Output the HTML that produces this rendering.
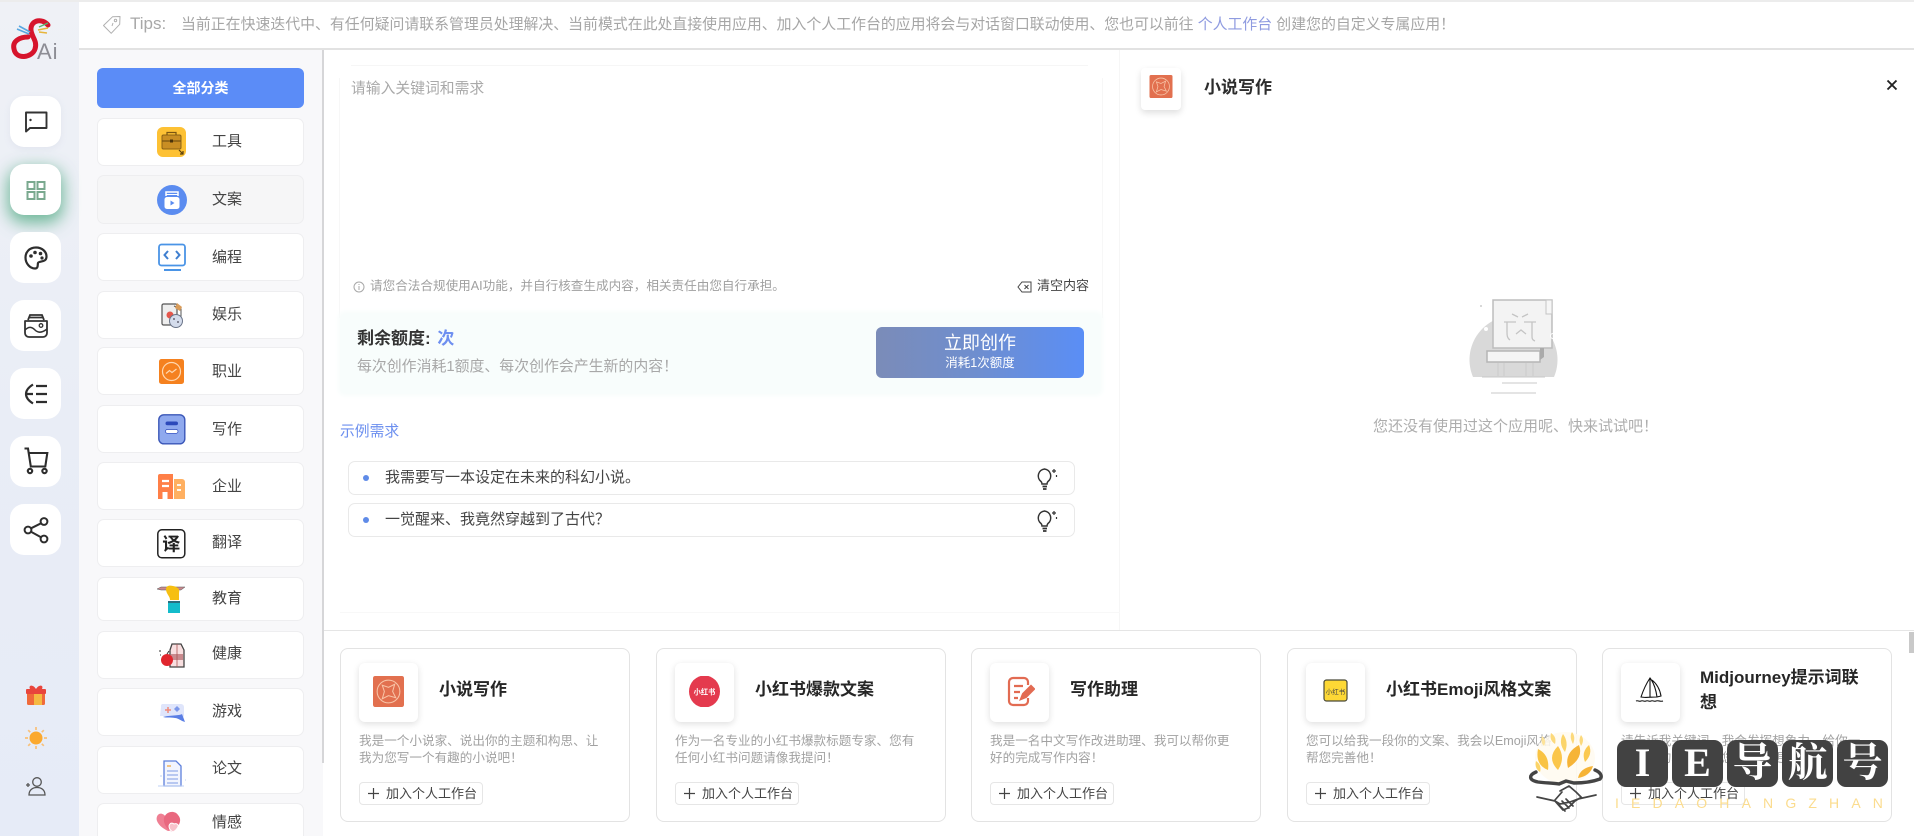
<!DOCTYPE html>
<html lang="zh-CN"><head><meta charset="utf-8"><title>小说写作</title>
<style>
*{box-sizing:border-box}
html,body{margin:0;padding:0;width:1914px;height:836px;overflow:hidden;background:#fff}
body{position:relative;font-family:"Liberation Sans","Noto Sans CJK SC",sans-serif;color:#333}
.a{position:absolute}
.t{position:absolute;white-space:nowrap}
.r{position:absolute;left:10px;width:51px;height:51px;background:#fff;border-radius:14px}
.r svg{position:absolute;left:0;top:0}
.c{position:absolute;left:97px;width:207px;background:#fff;border:1px solid #eeeef0;border-radius:7px}
.ct{position:absolute;left:212px;font-size:15px;line-height:20px;color:#444;white-space:nowrap}
.ci{position:absolute;left:155px}
.card{position:absolute;top:648px;width:290px;height:174px;border:1px solid #e3e3e3;border-radius:8px;background:#fff}
.ib{position:absolute;left:18px;top:14px;width:59px;height:59px;background:#fff;border-radius:6px;box-shadow:0 2px 7px rgba(0,0,0,.13)}
.ib svg{position:absolute;left:14px;top:13px}
.ti{position:absolute;left:98px;top:29px;font-size:17px;line-height:24px;font-weight:700;color:#262626;white-space:nowrap}
.de{position:absolute;left:18px;top:84px;width:250px;font-size:12.6px;line-height:17px;color:#a2a2a2}
.bt{position:absolute;left:18px;top:133px;width:124px;height:23px;border:1px solid #e6e6e6;border-radius:4px;font-size:13px;line-height:21px;color:#444;padding-left:26px;white-space:nowrap}
.bt svg{position:absolute;left:8px;top:5px}
.ex{position:absolute;left:348px;width:727px;height:34px;border:1px solid #e9e9e9;border-radius:7px;background:#fff}
.ex i{position:absolute;left:14px;top:13px;width:6px;height:6px;border-radius:50%;background:#5f8be8}
.ex span{position:absolute;left:36px;top:6px;font-size:15px;line-height:20px;color:#444;white-space:nowrap}
.ex svg{position:absolute;left:686px;top:5px}
.seal{position:absolute;top:740px;width:51px;height:47px;background:#424242;border-radius:9px;color:#fff;font-family:"Liberation Serif","Noto Serif CJK SC",serif;font-size:40px;line-height:46px;text-align:center;font-weight:700}
</style></head><body>

<!-- rail -->
<div class="a" style="left:0;top:0;width:79px;height:836px;background:linear-gradient(180deg,#eff1f6 0%,#e9edf6 50%,#e6ebf7 100%)"></div>
<div class="a" style="left:79px;top:50px;width:244px;height:786px;background:#f8f8fa"></div>
<div class="a" style="left:322px;top:50px;width:2px;height:713px;background:#d6d6d8"></div>
<div class="a" style="left:0;top:0;width:1914px;height:2px;background:#ececec"></div>
<div class="a" style="left:79px;top:2px;width:1835px;height:47px;background:#fff"></div>
<div class="a" style="left:79px;top:48px;width:1835px;height:2px;background:#e2e2e2"></div>

<!-- logo -->
<svg class="a" style="left:8px;top:16px" width="56" height="48" viewBox="0 0 56 48">
<path d="M40 9C34 2 24 4 23 12C22 20 30 24 27 33C24 42 8 44 6 33C4 25 12 21 20 21" fill="none" stroke="#d6142c" stroke-width="5" stroke-linecap="round"/>
<path d="M9 13l12 5M11 10l11 6" stroke="#58a7e0" stroke-width="1.6"/><path d="M30 14l10-2M31 16l8 1" stroke="#e7b53c" stroke-width="1.6"/><path d="M31 11l9-4" stroke="#57b56d" stroke-width="1.4"/>
</svg>
<div class="t" style="left:37px;top:40px;font-size:22px;line-height:24px;color:#8d8d95;font-weight:400;letter-spacing:1px">Ai</div>

<div class="r" style="top:96px;box-shadow:0 2px 6px rgba(190,198,220,.25)"><svg width="51" height="51" viewBox="0 0 51 51"><path d="M16 16.500h20.500v15.500H20l-4 3.500z" fill="none" stroke="#333" stroke-width="1.900" stroke-linejoin="round"/><circle cx="20.500" cy="24" r="1.200" fill="#333"/></svg></div>
<div class="r" style="top:164px;box-shadow:0 6px 16px 2px rgba(80,170,130,.8)"><svg width="51" height="51" viewBox="0 0 51 51" fill="none" stroke="#7aa98f" stroke-width="2"><rect x="17.500" y="18" width="7" height="7"/><rect x="27.500" y="18" width="7" height="7"/><rect x="17.500" y="28" width="7" height="7"/><rect x="27.500" y="28" width="7" height="7"/></svg></div>
<div class="r" style="top:232px"><svg width="51" height="51" viewBox="0 0 51 51"><path d="M26 15.500C19 15.500 15.500 20.500 15.500 25.500C15.500 31.500 20 36.500 25 36.500C28.500 36.500 27.500 32.500 28 31C29 28.500 36.500 31 36.500 24.500C36.500 19.500 32 15.500 26 15.500Z" fill="none" stroke="#2d2d2d" stroke-width="2.200"/><circle cx="21" cy="24" r="1.800" fill="#2d2d2d"/><circle cx="25" cy="20.500" r="1.800" fill="#2d2d2d"/><circle cx="30.500" cy="21.500" r="1.800" fill="#2d2d2d"/><circle cx="32" cy="26" r="1.600" fill="#2d2d2d"/></svg></div>
<div class="r" style="top:300px"><svg width="51" height="51" viewBox="0 0 51 51" fill="none" stroke="#333" stroke-width="1.800"><path d="M15 21h22v12a4 4 0 0 1-4 4H19a4 4 0 0 1-4-4z" stroke-linejoin="round"/><path d="M18 20l2-5h12l2 5M19 17.500h14"/><path d="M15 30c4-4 7-3 10 0s7 3 12-1" stroke-width="1.500"/><circle cx="31" cy="25.500" r="1.800" stroke-width="1.300"/></svg></div>
<div class="r" style="top:368px"><svg width="51" height="51" viewBox="0 0 51 51" fill="none" stroke="#2d2d2d" stroke-width="2.200"><path d="M23 16.500c-4 2.500-7 5.500-7 9.500 0 4 3 7 7 9.500M16 26h7"/><path d="M26 18h11M26 26h11M26 34h11"/></svg></div>
<div class="r" style="top:436px"><svg width="51" height="51" viewBox="0 0 51 51" fill="none" stroke="#2d2d2d" stroke-width="2.100"><path d="M14.500 12.500h3.500l2.800 18h14.500l2-13.500H18.500"/><circle cx="20" cy="35" r="2.200"/><circle cx="34.500" cy="35" r="2.200"/></svg></div>
<div class="r" style="top:504px"><svg width="51" height="51" viewBox="0 0 51 51" fill="none" stroke="#2d2d2d" stroke-width="2"><circle cx="34" cy="17.500" r="3.400"/><circle cx="18" cy="26" r="3.400"/><circle cx="34" cy="35" r="3.400"/><path d="M21 24.300l10-5M21 27.700l10 5.500"/></svg></div>

<!-- gift / sun / user -->
<svg class="a" style="left:25px;top:684px" width="22" height="22" viewBox="0 0 22 22"><rect x="2" y="6" width="18" height="15" rx="1.500" fill="#f06a3a"/><rect x="9" y="6" width="8" height="15" fill="#f5b942"/><rect x="1" y="5" width="20" height="5" rx="1" fill="#e8453c"/><path d="M11 5C8 0 3 1 5 5zM11 5c3-5 8-4 6 0z" fill="#e8453c"/></svg>
<svg class="a" style="left:25px;top:727px" width="22" height="22" viewBox="0 0 22 22"><circle cx="11" cy="11" r="6.500" fill="#fba92f"/><path d="M11 0v3M11 19v3M0 11h3M19 11h3M3.200 3.200l2 2M16.800 16.800l2 2M18.800 3.200l-2 2M5.200 16.800l-2 2" stroke="#f9c077" stroke-width="1.700"/></svg>
<svg class="a" style="left:25px;top:776px" width="22" height="20" viewBox="0 0 22 20" fill="none" stroke="#555" stroke-width="1.300"><circle cx="12" cy="6" r="4.300"/><path d="M4 19c0-5 3.500-7.500 8-7.500s8 2.500 8 7.500z"/><path d="M1 9h4M3 7v4"/></svg>

<!-- categories -->
<div class="a" style="left:97px;top:68px;width:207px;height:40px;background:#5b8cf7;border-radius:6px;color:#fff;font-size:14px;font-weight:700;line-height:40px;text-align:center">全部分类</div>

<div class="c" style="top:118px;height:48px"></div>
<div class="c" style="top:175px;height:49px;background:#f6f6f7"></div>
<div class="c" style="top:233px;height:48px"></div>
<div class="c" style="top:291px;height:48px"></div>
<div class="c" style="top:347px;height:48px"></div>
<div class="c" style="top:405px;height:48px"></div>
<div class="c" style="top:462px;height:48px"></div>
<div class="c" style="top:519px;height:48px"></div>
<div class="c" style="top:577px;height:44px"></div>
<div class="c" style="top:631px;height:48px"></div>
<div class="c" style="top:688px;height:48px"></div>
<div class="c" style="top:746px;height:48px"></div>
<div class="c" style="top:803px;height:48px"></div>

<div class="ct" style="top:132px">工具</div>
<div class="ct" style="top:190px">文案</div>
<div class="ct" style="top:248px">编程</div>
<div class="ct" style="top:305px">娱乐</div>
<div class="ct" style="top:362px">职业</div>
<div class="ct" style="top:420px">写作</div>
<div class="ct" style="top:477px">企业</div>
<div class="ct" style="top:533px">翻译</div>
<div class="ct" style="top:589px">教育</div>
<div class="ct" style="top:644px">健康</div>
<div class="ct" style="top:702px">游戏</div>
<div class="ct" style="top:759px">论文</div>
<div class="ct" style="top:813px">情感</div>

<svg class="ci" style="top:125px" width="32" height="34" viewBox="0 0 32 34"><rect x="2" y="2" width="29" height="30" rx="6" fill="#fdc134"/><rect x="7" y="10" width="19" height="14" rx="1.500" fill="#c98e23" stroke="#8a6216"/><path d="M12 10V7.500h9V10M7 16h19" fill="none" stroke="#7a5512" stroke-width="1.200"/><rect x="15" y="14.500" width="3" height="3" fill="#4a330a"/><path d="M24 25l4 4M28 26v3h-3" fill="none" stroke="#5a400c" stroke-width="1.200"/></svg>
<svg class="ci" style="top:183px" width="32" height="34" viewBox="0 0 32 34"><circle cx="17" cy="17" r="15" fill="#5b8cf0"/><path d="M11 13V9h12v4" fill="none" stroke="#fff" stroke-width="1.500"/><path d="M11 11.500h12" stroke="#fff"/><rect x="9.500" y="14" width="15" height="12" rx="2.500" fill="#fff"/><path d="M15.500 17.500l4 2.500-4 2.500z" fill="#5b8cf0"/></svg>
<svg class="ci" style="top:241px" width="32" height="34" viewBox="0 0 32 34" fill="none" stroke="#4a94e6" stroke-width="1.800"><rect x="4" y="3.500" width="26" height="21" rx="2.500"/><path d="M13 10l-3.500 4 3.500 4M21 10l3.500 4-3.500 4" stroke-width="2" stroke="#3f7fd0"/><path d="M9 29h17" stroke-width="2"/></svg>
<svg class="ci" style="top:300px" width="32" height="30" viewBox="0 0 32 30"><rect x="7" y="4" width="15" height="21" rx="1.500" fill="#eee" stroke="#555" stroke-width="1.200"/><path d="M19 6l7 3v8" fill="none" stroke="#555"/><path d="M22 3l5 4-2 4-5-3z" fill="#d99c5a"/><circle cx="15" cy="15" r="3.500" fill="#e5574c"/><circle cx="21" cy="21" r="6.500" fill="#d4dcec" stroke="#6a7488"/><circle cx="19" cy="19" r="1" fill="#667"/><circle cx="23" cy="22" r="1" fill="#667"/></svg>
<svg class="ci" style="top:356px" width="32" height="31" viewBox="0 0 32 31"><rect x="4" y="3" width="25" height="25" rx="2.500" fill="#f5811f"/><circle cx="16.500" cy="15.500" r="9" fill="none" stroke="#ffd8b0" stroke-width="1.200"/><path d="M11 17.500l3.500-3 2.500 2 4.500-3.500" fill="none" stroke="#ffd8b0" stroke-width="1.200"/></svg>
<svg class="ci" style="top:412px" width="32" height="34" viewBox="0 0 32 34"><rect x="3.800" y="2.800" width="26" height="29" rx="5" fill="#8fa9ee" stroke="#3b57b8" stroke-width="1.400"/><rect x="10.500" y="9.500" width="12.500" height="3.800" rx="1.900" fill="#2c49ba"/><rect x="10.500" y="17.500" width="12.500" height="3.800" rx="1.900" fill="#fff" stroke="#2c49ba" stroke-width=".7"/></svg>
<svg class="ci" style="top:472px" width="32" height="30" viewBox="0 0 32 30"><path d="M3 4a2 2 0 0 1 2-2h13v25H3z" fill="#ff7f47"/><path d="M19 7h8a3 3 0 0 1 3 3v17H19z" fill="#ffb061"/><path d="M7 9h7M7 14h7" stroke="#fff" stroke-width="2.200"/><rect x="7.500" y="20" width="5" height="7" fill="#fff"/><path d="M22 13h4M22 18h4" stroke="#fff" stroke-width="1.800"/></svg>
<svg class="ci" style="top:527px" width="32" height="33" viewBox="0 0 32 33"><rect x="2.800" y="2.800" width="27" height="28" rx="4" fill="#fff" stroke="#222" stroke-width="1.500"/><text x="16.300" y="23.500" font-size="18" font-weight="700" text-anchor="middle" fill="#222" font-family="Noto Sans CJK SC,sans-serif">译</text></svg>
<svg class="ci" style="top:583px" width="32" height="31" viewBox="0 0 32 31"><path d="M2 6l4-2h24l-4 3H6z" fill="#c9898f" stroke="#555" stroke-width=".5"/><rect x="13" y="19" width="12" height="11" fill="#14bccb"/><path d="M13 18h12v2H13z" fill="#2a6f80"/><path d="M11 6c0-3 3-4 7-3 5 1 7 3 6 7l0 7H15c0-4-4-6-4-11z" fill="#f6bf12"/></svg>
<svg class="ci" style="top:641px" width="32" height="28" viewBox="0 0 32 28"><path d="M15 9l2-6h9l3 6v17H15z" fill="#f8dfe0" stroke="#444" stroke-width="1.300"/><path d="M16 13h12v6H16z" fill="#c98a8e"/><path d="M22 3v23" stroke="#a55" stroke-width=".8"/><circle cx="12" cy="19" r="6" fill="#e0262e"/><path d="M12 13l2-3M4 10h2M5 14h1" stroke="#333"/></svg>
<svg class="ci" style="top:700px" width="32" height="24" viewBox="0 0 32 24"><path d="M7 4h19a3 3 0 0 1 3 3v10c-3-2-9-2-13-1H5l1-9a3 3 0 0 1 1-3z" fill="#dfe5fb"/><path d="M8 17c6-2 16-1 19-3l3 8c-4-1-7-4-10-4-5-1-9 0-12-1z" fill="#5a7ee5"/><path d="M10 10h6M13 7v6" stroke="#f08a7a" stroke-width="1.500"/><path d="M22 6l3 3-3 3-3-3z" fill="#7d98ea"/></svg>
<svg class="ci" style="top:758px" width="32" height="30" viewBox="0 0 32 30"><path d="M9 3h12l5 5v20H9z" fill="#f2f5fe" stroke="#5d80dc" stroke-width="1.300"/><path d="M12 13h11M12 17h11M12 21h11M12 25h11" stroke="#7f9be4" stroke-width="1.100"/><path d="M12 8h4" stroke="#f1b45e" stroke-width="1.500"/><path d="M3 28h26M5 18h2M30 22h1" stroke="#bfd0f4"/></svg>
<svg class="ci" style="top:809px" width="32" height="26" viewBox="0 0 32 26"><path d="M11 8C6 1 0 6 2 12c2 5 7 8 11 10 3 0 5-2 7-5" fill="#ef7f93"/><path d="M9 9c2-7 11-8 14-3 3 3 3 8-1 12l-5 5c-5-3-9-8-8-14z" fill="#e9687f"/><path d="M14 17c1-4 4-3 5-2 2-1 5 0 4 3-1 2-3 4-5 5-2-1-4-3-4-6z" fill="#f8c2cb" stroke="#fff"/></svg>

<!-- tips -->
<svg class="a" style="left:102px;top:15px" width="20" height="20" viewBox="0 0 20 20" fill="none" stroke="#b0b0b0" stroke-width="1"><path d="M1.500 10.500L10.500 1.800l7.500-.3-.3 7.800-8.500 9z" stroke-linejoin="round"/><circle cx="13.500" cy="5.500" r="1.200"/><path d="M10 11l1-3"/></svg>
<div class="t" style="left:130px;top:13px;font-size:17px;line-height:22px;color:#a8a8a8">Tips:</div>
<div class="t" style="left:181px;top:15px;font-size:14.9px;line-height:20px;color:#a6a6a6">当前正在快速迭代中、有任何疑问请联系管理员处理解决、当前模式在此处直接使用应用、加入个人工作台的应用将会与对话窗口联动使用、您也可以前往 <span style="color:#8f9be0">个人工作台</span> 创建您的自定义专属应用！</div>

<!-- main left -->
<div class="a" style="left:351px;top:65px;width:737px;height:1px;background:#f6f6f6"></div>
<div class="a" style="left:339px;top:78px;width:1px;height:240px;background:#f7f7f7"></div>
<div class="a" style="left:1102px;top:78px;width:1px;height:240px;background:#f7f7f7"></div>
<div class="a" style="left:1119px;top:50px;width:1px;height:580px;background:#f6f6f6"></div>
<div class="t" style="left:351px;top:79px;font-size:14.8px;line-height:20px;color:#a9a9a9">请输入关键词和需求</div>

<svg class="a" style="left:353px;top:281px" width="12" height="12" viewBox="0 0 12 12" fill="none" stroke="#a8a8a8"><circle cx="6" cy="6" r="5"/><path d="M6 5v4M6 3v1"/></svg>
<div class="t" style="left:370px;top:276px;font-size:12.6px;line-height:20px;color:#a0a0a0">请您合法合规使用AI功能，并自行核查生成内容，相关责任由您自行承担。</div>
<svg class="a" style="left:1017px;top:281px" width="15" height="12" viewBox="0 0 15 12" fill="none" stroke="#444" stroke-width="1"><path d="M5 1h9v10H5L1 6z"/><path d="M7.500 4l4 4M11.500 4l-4 4"/></svg>
<div class="t" style="left:1037px;top:276px;font-size:13px;line-height:20px;color:#444">清空内容</div>

<div class="a" style="left:341px;top:314px;width:759px;height:79px;background:#f8fdfc;border-radius:4px;box-shadow:0 0 5px 3px #f8fdfc"></div>
<div class="t" style="left:357px;top:327px;font-size:17px;line-height:24px;font-weight:700;color:#333">剩余额度: <span style="color:#6e8ff0;margin-left:2px">次</span></div>
<div class="t" style="left:357px;top:357px;font-size:14.9px;line-height:20px;color:#a8a8a8">每次创作消耗1额度、每次创作会产生新的内容！</div>
<div class="a" style="left:876px;top:327px;width:208px;height:51px;border-radius:6px;background:linear-gradient(90deg,#7b8cb8 0%,#6e8ed0 50%,#5a8ef6 100%)"></div>
<div class="t" style="left:876px;width:208px;top:331px;text-align:center;font-size:18px;line-height:24px;color:#fff">立即创作</div>
<div class="t" style="left:876px;width:208px;top:354px;text-align:center;font-size:12.5px;line-height:18px;color:#fff">消耗1次额度</div>

<div class="t" style="left:340px;top:422px;font-size:14.8px;line-height:20px;color:#6c8fef">示例需求</div>
<div class="ex" style="top:461px"><i></i><span>我需要写一本设定在未来的科幻小说。</span><svg width="24" height="24" viewBox="0 0 24 24" fill="none" stroke="#333" stroke-width="1.500"><path d="M9.500 2a7 7 0 0 0-3.500 12.500c.700.600 1 1.500 1 2.500h5c0-1 .300-1.900 1-2.500A7 7 0 0 0 9.500 2z"/><path d="M7.500 19.500h4.500M8 22h3.500" stroke-width="1.700"/><path d="M19 2v4M17 4h4M21.500 8v2" stroke-width="1.200"/></svg></div>
<div class="ex" style="top:503px"><i></i><span>一觉醒来、我竟然穿越到了古代？</span><svg width="24" height="24" viewBox="0 0 24 24" fill="none" stroke="#333" stroke-width="1.500"><path d="M9.500 2a7 7 0 0 0-3.500 12.500c.700.600 1 1.500 1 2.500h5c0-1 .300-1.900 1-2.500A7 7 0 0 0 9.500 2z"/><path d="M7.500 19.500h4.500M8 22h3.500" stroke-width="1.700"/><path d="M19 2v4M17 4h4M21.500 8v2" stroke-width="1.200"/></svg></div>
<div class="a" style="left:340px;top:612px;width:780px;height:1px;background:#f8f8f8"></div>

<!-- right panel -->
<div class="a" style="left:1141px;top:68px;width:40px;height:42px;background:#fff;border-radius:4px;box-shadow:0 3px 7px rgba(0,0,0,.13)"></div>
<svg class="a" style="left:1149px;top:75px" width="24" height="23" viewBox="0 0 30 30"><rect width="30" height="30" rx="2" fill="#e2704f"/><circle cx="15" cy="15" r="11" fill="none" stroke="#f8c5a8"/><path d="M9 9l6 2 6-3-2 7 3 6-7-2-6 3 2-7z" fill="none" stroke="#f8c5a8"/></svg>
<div class="t" style="left:1204px;top:76px;font-size:17px;line-height:24px;font-weight:700;color:#2d2d2d">小说写作</div>
<svg class="a" style="left:1886px;top:79px" width="12" height="12" viewBox="0 0 12 12"><path d="M1.500 1.500l9 9M10.500 1.500l-9 9" stroke="#222" stroke-width="1.900"/></svg>

<svg class="a" style="left:1460px;top:290px" width="110" height="110" viewBox="0 0 110 110">
<path d="M13 87A44 44 0 1 1 94 87z" fill="#d9d9d9"/>
<path d="M33 10h59v48H33z" fill="#f3f3f3" stroke="#bdbdbd" stroke-width="1.500"/>
<path d="M86 10h6v14h-6z" fill="#f6f6f6" stroke="#c4c4c4"/>
<path d="M27 61h53v11H27z" fill="#f5f5f5" stroke="#b5b5b5" stroke-width="1.500"/>
<path d="M80 58v12l4-3V58z" fill="#aaa"/>
<path d="M44 32h12M47 32v10c0 3 0 6 3 8M64 32h12M72 32v14c0 2 0 4 3 5M52 24l6 3M68 24l-6 3M56 44l5-4 5 4" fill="none" stroke="#c4c4c4" stroke-width="1.300"/>
<path d="M38 73v13M44 73v13M66 73v13M73 73v13" stroke="#ccc"/>
<path d="M22 87h63M42 93h35M31 103h45" stroke="#c8c8c8"/>
<circle cx="26" cy="39" r="2" fill="#fff"/><circle cx="93" cy="46" r="2.500" fill="none" stroke="#fff"/><circle cx="21" cy="16" r="1" fill="#ccc"/>
</svg>
<div class="t" style="left:1373px;top:417px;font-size:15px;line-height:20px;color:#adadad">您还没有使用过这个应用呢、快来试试吧！</div>

<!-- bottom -->
<div class="a" style="left:324px;top:630px;width:1590px;height:1px;background:#e5e5e5"></div>
<div class="a" style="left:1909px;top:632px;width:5px;height:21px;background:#c9c9c9"></div>

<div class="card" style="left:340px"><div class="ib"><svg width="31" height="31" viewBox="0 0 30 30"><rect width="30" height="30" rx="2" fill="#e2704f"/><circle cx="15" cy="15" r="11" fill="none" stroke="#f8c5a8"/><path d="M9 9l6 2 6-3-2 7 3 6-7-2-6 3 2-7z" fill="none" stroke="#f8c5a8"/></svg></div><div class="ti">小说写作</div><div class="de">我是一个小说家、说出你的主题和构思、让我为您写一个有趣的小说吧！</div><div class="bt"><svg width="11" height="11" viewBox="0 0 11 11"><path d="M5.500 0v11M0 5.500h11" stroke="#444" stroke-width="1.200"/></svg>加入个人工作台</div></div>

<div class="card" style="left:656px"><div class="ib"><svg width="31" height="31" viewBox="0 0 30 30"><ellipse cx="15" cy="15" rx="15" ry="15.500" fill="#e43a4e"/><text x="15" y="18" font-size="7" font-weight="700" fill="#fff" text-anchor="middle">小红书</text></svg></div><div class="ti">小红书爆款文案</div><div class="de">作为一名专业的小红书爆款标题专家、您有任何小红书问题请像我提问！</div><div class="bt"><svg width="11" height="11" viewBox="0 0 11 11"><path d="M5.500 0v11M0 5.500h11" stroke="#444" stroke-width="1.200"/></svg>加入个人工作台</div></div>

<div class="card" style="left:971px"><div class="ib"><svg width="31" height="31" viewBox="0 0 31 31" fill="none" stroke="#e26b52" stroke-width="2.200"><path d="M24 9V6a4 4 0 0 0-4-4H9a4 4 0 0 0-4 4v19a4 4 0 0 0 4 4h11a4 4 0 0 0 4-4v-3"/><path d="M10 10h9M10 16h6M10 22h4"/><path d="M17 23l2-5 8-8 3 3-8 8z" fill="#e26b52"/></svg></div><div class="ti">写作助理</div><div class="de">我是一名中文写作改进助理、我可以帮你更好的完成写作内容！</div><div class="bt"><svg width="11" height="11" viewBox="0 0 11 11"><path d="M5.500 0v11M0 5.500h11" stroke="#444" stroke-width="1.200"/></svg>加入个人工作台</div></div>

<div class="card" style="left:1287px"><div class="ib"><svg width="31" height="31" viewBox="0 0 31 31"><rect x="4" y="4" width="23" height="21" rx="2.500" fill="#fdd835" stroke="#4a4a3a" stroke-width="1.200"/><text x="15.500" y="18" font-size="6.500" fill="#444" text-anchor="middle">小红书</text></svg></div><div class="ti">小红书Emoji风格文案</div><div class="de">您可以给我一段你的文案、我会以Emoji风格帮您完善他！</div><div class="bt"><svg width="11" height="11" viewBox="0 0 11 11"><path d="M5.500 0v11M0 5.500h11" stroke="#444" stroke-width="1.200"/></svg>加入个人工作台</div></div>

<div class="card" style="left:1602px"><div class="ib"><svg width="31" height="31" viewBox="0 0 31 31" fill="none" stroke="#111" stroke-width="1.100"><path d="M15 2C11 8 8 15 6 21c4 1 10 0 16 0C21 14 19 7 15 2zM15 2l0 19M17 4c5 4 8 10 9 16l-4 1"/><path d="M1 25c2-1 3 1 5 0s3 1 5 0 3 1 5 0 3 1 5 0 4 1 7 0"/></svg></div><div class="ti" style="left:97px;top:16px;width:175px;white-space:normal;line-height:25px">Midjourney提示词联想</div><div class="de">请告诉我关键词，我会发挥想象力，给你一些奇特的联想，让您的想象更加奇妙！</div><div class="bt"><svg width="11" height="11" viewBox="0 0 11 11"><path d="M5.500 0v11M0 5.500h11" stroke="#444" stroke-width="1.200"/></svg>加入个人工作台</div></div>

<!-- watermark -->
<svg class="a" style="left:1500px;top:720px" width="110" height="100" viewBox="0 0 110 100">
<ellipse cx="65" cy="38" rx="30" ry="26" fill="#fffaf0" opacity=".85"/>
<g fill="#f8c443">
<path d="M68 48Q64 33 79 25Q84 38 68 48z" fill="#f6b437"/>
<path d="M58 50Q46 38 58 26Q66 38 58 50z" fill="#fbc64a"/>
<path d="M48 50Q35 45 38 29Q50 35 48 50z" fill="#f9c343"/>
<path d="M78 58Q80 48 93 46Q90 56 78 58z" fill="#f6b437"/>
<path d="M85 42Q81 32 89 25Q93 34 85 42z" fill="#fbc950"/>
<path d="M40 52Q34 48 36 41Q42 45 40 52z" fill="#fbd468"/>
<path d="M65 32Q58 23 63 14Q69 22 65 32z" fill="#fbd468"/>
<path d="M73 24Q69 17 72 12Q76 17 73 24z" fill="#fcd97b"/>
<path d="M55 24Q49 20 51 13Q57 17 55 24z" fill="#fcd97b"/>
<path d="M81 26Q78 20 81 15Q85 20 81 26z" fill="#fcd97b"/>
<path d="M44 26Q40 22 42 16Q47 20 44 26z" fill="#fde39a"/>
</g>
<path d="M36 52C29 55 28 60 38 62C46 63 52 63 59 64L66 61L74 63C82 63 92 62 100 59C103 56 100 52 95 50" fill="none" stroke="#444" stroke-width="3.400" stroke-linecap="round"/>
<path d="M37 77L55 81L60 84L70 82L78 79L96 75M55 81L63 90L68 88L75 81L80 78M60 71L69 66L76 72L82 78M62 72L55 80M58 84L65 91M62 81L69 88M66 79L73 86" fill="none" stroke="#444" stroke-width="1.700" stroke-linecap="round" stroke-linejoin="round"/>
</svg>
<div class="seal" style="left:1617px">I</div>
<div class="seal" style="left:1672px">E</div>
<div class="seal" style="left:1727px">导</div>
<div class="seal" style="left:1782px">航</div>
<div class="seal" style="left:1837px">号</div>
<div class="t" style="left:1615px;top:794px;width:268px;font-size:14px;line-height:18px;color:#fbdc8e;display:flex;justify-content:space-between"><span>I</span><span>E</span><span>D</span><span>A</span><span>O</span><span>H</span><span>A</span><span>N</span><span>G</span><span>Z</span><span>H</span><span>A</span><span>N</span></div>

</body></html>
